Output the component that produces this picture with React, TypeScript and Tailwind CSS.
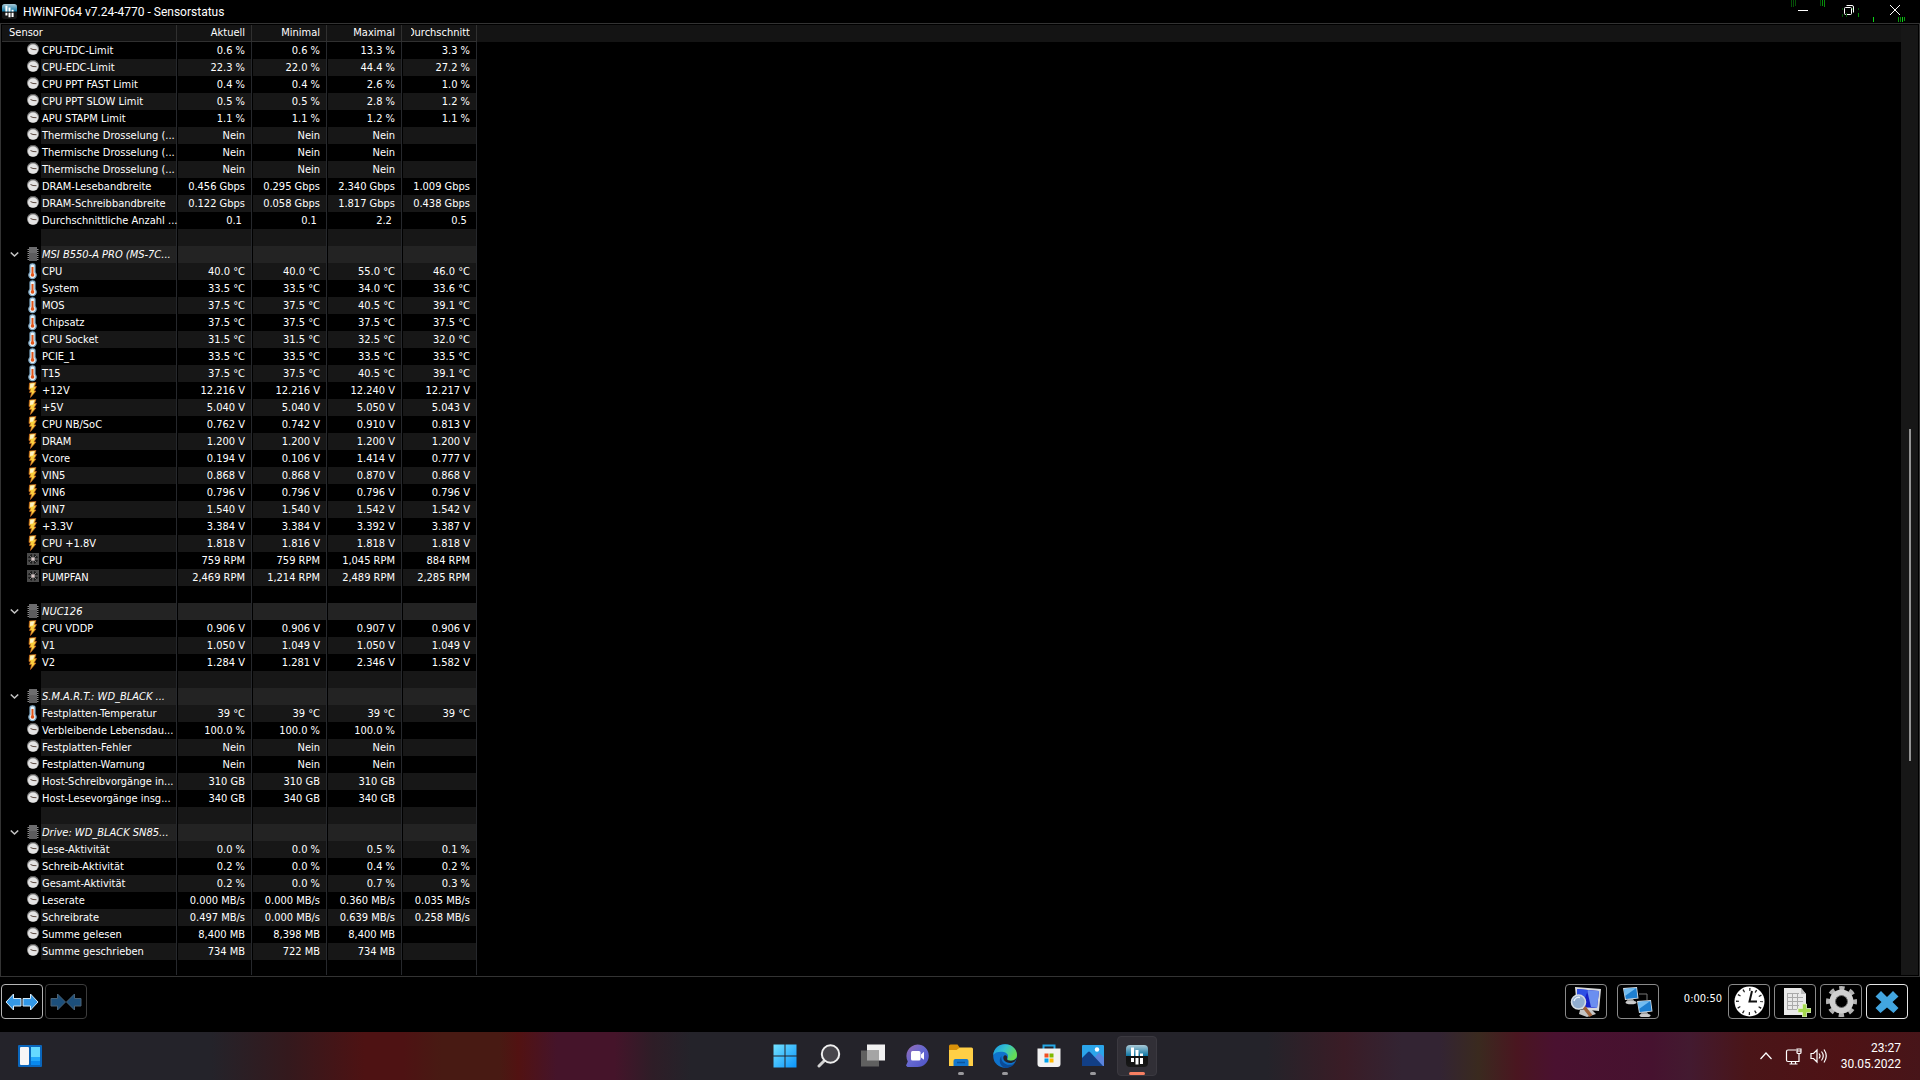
import type { ReactNode } from "react";

type IconKind = "clock" | "temp" | "volt" | "fan" | "chip";

type Row = {
    kind?: IconKind;
    name?: string;
    values?: string[];
    group?: boolean;
};

const row = (kind: IconKind, name: string, ...values: string[]): Row => ({ kind, name, values });
const group = (name: string): Row => ({ kind: "chip", name, group: true });
const spacer: Row = {};

const ROWS: Row[] = [
    row("clock", "CPU-TDC-Limit", "0.6 %", "0.6 %", "13.3 %", "3.3 %"),
    row("clock", "CPU-EDC-Limit", "22.3 %", "22.0 %", "44.4 %", "27.2 %"),
    row("clock", "CPU PPT FAST Limit", "0.4 %", "0.4 %", "2.6 %", "1.0 %"),
    row("clock", "CPU PPT SLOW Limit", "0.5 %", "0.5 %", "2.8 %", "1.2 %"),
    row("clock", "APU STAPM Limit", "1.1 %", "1.1 %", "1.2 %", "1.1 %"),
    row("clock", "Thermische Drosselung (...", "Nein", "Nein", "Nein"),
    row("clock", "Thermische Drosselung (...", "Nein", "Nein", "Nein"),
    row("clock", "Thermische Drosselung (...", "Nein", "Nein", "Nein"),
    row("clock", "DRAM-Lesebandbreite", "0.456 Gbps", "0.295 Gbps", "2.340 Gbps", "1.009 Gbps"),
    row("clock", "DRAM-Schreibbandbreite", "0.122 Gbps", "0.058 Gbps", "1.817 Gbps", "0.438 Gbps"),
    // no unit, the trailing space stays
    row("clock", "Durchschnittliche Anzahl ...", "0.1\u00a0", "0.1\u00a0", "2.2\u00a0", "0.5\u00a0"),
    spacer,
    group("MSI B550-A PRO (MS-7C..."),
    row("temp", "CPU", "40.0 °C", "40.0 °C", "55.0 °C", "46.0 °C"),
    row("temp", "System", "33.5 °C", "33.5 °C", "34.0 °C", "33.6 °C"),
    row("temp", "MOS", "37.5 °C", "37.5 °C", "40.5 °C", "39.1 °C"),
    row("temp", "Chipsatz", "37.5 °C", "37.5 °C", "37.5 °C", "37.5 °C"),
    row("temp", "CPU Socket", "31.5 °C", "31.5 °C", "32.5 °C", "32.0 °C"),
    row("temp", "PCIE_1", "33.5 °C", "33.5 °C", "33.5 °C", "33.5 °C"),
    row("temp", "T15", "37.5 °C", "37.5 °C", "40.5 °C", "39.1 °C"),
    row("volt", "+12V", "12.216 V", "12.216 V", "12.240 V", "12.217 V"),
    row("volt", "+5V", "5.040 V", "5.040 V", "5.050 V", "5.043 V"),
    row("volt", "CPU NB/SoC", "0.762 V", "0.742 V", "0.910 V", "0.813 V"),
    row("volt", "DRAM", "1.200 V", "1.200 V", "1.200 V", "1.200 V"),
    row("volt", "Vcore", "0.194 V", "0.106 V", "1.414 V", "0.777 V"),
    row("volt", "VIN5", "0.868 V", "0.868 V", "0.870 V", "0.868 V"),
    row("volt", "VIN6", "0.796 V", "0.796 V", "0.796 V", "0.796 V"),
    row("volt", "VIN7", "1.540 V", "1.540 V", "1.542 V", "1.542 V"),
    row("volt", "+3.3V", "3.384 V", "3.384 V", "3.392 V", "3.387 V"),
    row("volt", "CPU +1.8V", "1.818 V", "1.816 V", "1.818 V", "1.818 V"),
    row("fan", "CPU", "759 RPM", "759 RPM", "1,045 RPM", "884 RPM"),
    row("fan", "PUMPFAN", "2,469 RPM", "1,214 RPM", "2,489 RPM", "2,285 RPM"),
    spacer,
    group("NUC126"),
    row("volt", "CPU VDDP", "0.906 V", "0.906 V", "0.907 V", "0.906 V"),
    row("volt", "V1", "1.050 V", "1.049 V", "1.050 V", "1.049 V"),
    row("volt", "V2", "1.284 V", "1.281 V", "2.346 V", "1.582 V"),
    spacer,
    group("S.M.A.R.T.: WD_BLACK ..."),
    row("temp", "Festplatten-Temperatur", "39 °C", "39 °C", "39 °C", "39 °C"),
    row("clock", "Verbleibende Lebensdau...", "100.0 %", "100.0 %", "100.0 %"),
    row("clock", "Festplatten-Fehler", "Nein", "Nein", "Nein"),
    row("clock", "Festplatten-Warnung", "Nein", "Nein", "Nein"),
    row("clock", "Host-Schreibvorgänge in...", "310 GB", "310 GB", "310 GB"),
    row("clock", "Host-Lesevorgänge insg...", "340 GB", "340 GB", "340 GB"),
    spacer,
    group("Drive: WD_BLACK SN85..."),
    row("clock", "Lese-Aktivität", "0.0 %", "0.0 %", "0.5 %", "0.1 %"),
    row("clock", "Schreib-Aktivität", "0.2 %", "0.0 %", "0.4 %", "0.2 %"),
    row("clock", "Gesamt-Aktivität", "0.2 %", "0.0 %", "0.7 %", "0.3 %"),
    row("clock", "Leserate", "0.000 MB/s", "0.000 MB/s", "0.360 MB/s", "0.035 MB/s"),
    row("clock", "Schreibrate", "0.497 MB/s", "0.000 MB/s", "0.639 MB/s", "0.258 MB/s"),
    row("clock", "Summe gelesen", "8,400 MB", "8,398 MB", "8,400 MB"),
    row("clock", "Summe geschrieben", "734 MB", "722 MB", "734 MB"),
    spacer,
];

function SensorIcon({ kind }: { kind: IconKind }) {
    return (
        <svg className="block h-[17px] w-[14px] shrink-0" viewBox="0 0 14 17" aria-hidden="true">
            {kind === "clock" && (
                <>
                    <circle cx="7" cy="7" r="6" fill="#8f8f8f" />
                    <path d="M2.5 3.5a6 6 0 0 1 9 0" stroke="#555" strokeWidth="1" fill="none" />
                    <circle cx="7" cy="7.6" r="5" fill="#e4e4e4" />
                    <path d="M4.500 6.500 7 7.500l3.500.2" stroke="#5c4a42" strokeWidth="1" fill="none" />
                </>
            )}
            {kind === "temp" && (
                <>
                    <path d="M4 2.500Q4 .8 6.500.8T9 2.500V9.500a3.600 3.600 0 1 1-5 0Z" fill="#e8f2f8" stroke="#7fa9c6" strokeWidth="1.200" />
                    <rect x="5.500" y="4" width="2" height="8" fill="#e2561a" />
                    <circle cx="6.500" cy="12" r="1.800" fill="#e2561a" />
                </>
            )}
            {kind === "volt" && (
                <>
                    <path d="M3.500 1 10 .5 8.500 4.500h2L8 9h2L4.500 15.500l1-5H3.500L4.500 7.500H3Z" fill="#f9cf3e" stroke="#c8621c" strokeWidth=".7" />
                    <path d="M4.300 1.700 8.500 1.300 7 5.500 4 6Z" fill="#fdf3c4" />
                </>
            )}
            {kind === "fan" && (
                <>
                    <rect x="1" y="1" width="12" height="12" fill="#4a4a4a" />
                    <circle cx="7" cy="7" r="5" fill="#1c1c1c" />
                    <path d="M7 2v10M2 7h10M3.500 3.500l7 7M10.500 3.500l-7 7" stroke="#777" strokeWidth="1" />
                    <circle cx="7" cy="7" r="1.800" fill="#d9c8c8" />
                </>
            )}
            {kind === "chip" && (
                <>
                    <path d="M1.500 3.500h11M1.500 5.500h11M1.500 7.500h11M1.500 9.500h11M1.500 11.500h11M1.500 13.500h11" stroke="#8d8d8d" strokeWidth="1" />
                    <rect x="3" y="1" width="8" height="14" fill="#5c5c5e" />
                    <rect x="3" y="1" width="8" height="6" fill="#6c6c6e" />
                </>
            )}
        </svg>
    );
}

function HwinfoLogo({ className }: { className: string }) {
    return (
        <svg className={className} viewBox="0 0 22 22" aria-hidden="true">
            <defs>
                <linearGradient id="hw" x1="0" y1="0" x2="0" y2="1">
                    <stop offset="0" stopColor="#a9c9d6" />
                    <stop offset=".48" stopColor="#1278a5" />
                    <stop offset=".52" stopColor="#111" />
                    <stop offset="1" stopColor="#181818" />
                </linearGradient>
            </defs>
            <rect width="22" height="22" rx="4" fill="url(#hw)" />
            <path d="M6.500 2.500V11M11 5v6M15.500 8.500V11M6.500 13v4M11 13v6.500M15.500 13v6" stroke="#fff" strokeWidth="3" />
        </svg>
    );
}

function Chevron() {
    return (
        <svg className="block h-[9px] w-[9px]" viewBox="0 0 9 9" fill="none" stroke="#c4c4c4" strokeWidth="1.6" aria-hidden="true">
            <path d="m.8 2.500 3.700 3.500L8.200 2.500" />
        </svg>
    );
}

function TitleBar() {
    return (
        <header className="relative flex h-[23px] shrink-0 items-center pl-[2px] pr-[2px]">
            <HwinfoLogo className="h-[15px] w-[15px]" />
            <h1 className="ml-[6px] font-[Roboto,'Open_Sans',sans-serif] text-[12px] leading-[20px]">HWiNFO64 v7.24-4770 - Sensorstatus</h1>
            <div className="ml-auto flex self-start">
                <button type="button" aria-label="Minimieren" className="flex h-[20px] w-[46px] items-center justify-center">
                    <svg className="h-[10px] w-[10px]" viewBox="0 0 10 10" stroke="#fff"><path d="M0 5.500h10" /></svg>
                </button>
                <button type="button" aria-label="Verkleinern" className="flex h-[20px] w-[46px] items-center justify-center">
                    <svg className="h-[10px] w-[10px]" viewBox="0 0 10 10" fill="none" stroke="#fff">
                        <rect x=".5" y="2.500" width="7" height="7" rx="1" />
                        <path d="M2.500.5H8Q9.500.5 9.500 2v5.500" />
                    </svg>
                </button>
                <button type="button" aria-label="Schließen" className="flex h-[20px] w-[46px] items-center justify-center">
                    <svg className="h-[10px] w-[10px]" viewBox="0 0 10 10" stroke="#fff"><path d="m0 0 10 10M10 0 0 10" /></svg>
                </button>
            </div>
            {/* green specks of the desktop overlay */}
            <svg className="pointer-events-none absolute right-0 top-0 h-[23px] w-[130px]" viewBox="0 0 130 23" aria-hidden="true">
                <path d="M1.500 0v7M3.500 0v7M5.500 0v6M30.500 0v6M52.500 8v2M52.500 14v3M56.500 13v4M62.500 8v2M68.500 8v2" stroke="#064f08" />
                <path d="M32.500 0v6M34.500 0v7M68.500 13v4M110.500 17v5" stroke="#078c0b" />
                <path d="M83.500 17v5M112.500 17v5" stroke="#0bd414" />
                <path d="M108.500 17v5M114.500 17v4" stroke="#079b0b" />
            </svg>
        </header>
    );
}

function SensorTable() {
    return (
        <table className="w-full table-fixed border-separate border-spacing-0 text-[11px] leading-[16px]">
            <colgroup>
                <col className="w-[175px]" />
                <col className="w-[75px]" />
                <col className="w-[75px]" />
                <col className="w-[75px]" />
                <col className="w-[75px]" />
                <col />
            </colgroup>
            <thead>
                <tr className="h-[17px] bg-[#141414]">
                    <th scope="col" className="border-b border-r border-[#303030] p-0 pl-[7px] text-left font-normal">Sensor</th>
                    {["Aktuell", "Minimal", "Maximal", "Durchschnitt"].map((title) => (
                        <th key={title} scope="col" className="border-b border-r border-[#303030] p-0 pl-[9px] pr-[6px] font-normal">
                            <div className="flex justify-end overflow-hidden">{title}</div>
                        </th>
                    ))}
                    <th className="p-0" />
                </tr>
            </thead>
            <tbody>
                {ROWS.map((r, i) => {
                    const fill = r.group ? "bg-[#232323]" : i % 2 ? "bg-[#171717]" : "bg-black";
                    return (
                        <tr key={i} className="h-[17px]">
                            <td className="border-r border-[#26282c] p-0">
                                <div className="flex h-[17px] whitespace-nowrap">
                                    <div className="flex w-[39px] shrink-0 items-center justify-end pr-[1px]">
                                        {r.group && (
                                            <button type="button" aria-label={`${r.name} einklappen`} className="mr-[7px]">
                                                <Chevron />
                                            </button>
                                        )}
                                        {r.kind && <SensorIcon kind={r.kind} />}
                                    </div>
                                    <div className={`min-w-0 flex-1 pl-[1px] pt-[1px] ${fill} ${r.group ? "italic" : ""}`}>{r.name}</div>
                                </div>
                            </td>
                            {[0, 1, 2, 3].map((c) => (
                                <td key={c} className={`whitespace-nowrap border-l border-r border-l-black border-r-[#26282c] p-0 pr-[6px] pt-[1px] text-right ${fill}`}>
                                    {r.values?.[c]}
                                </td>
                            ))}
                            <td className="p-0" />
                        </tr>
                    );
                })}
            </tbody>
        </table>
    );
}

function ToolButton({ label, border = "border-[#8a8a8a]", disabled, children }: { label: string; border?: string; disabled?: boolean; children: ReactNode }) {
    return (
        <button type="button" aria-label={label} disabled={disabled} className={`flex h-[35px] w-[42px] items-center justify-center rounded-[4px] border ${border}`}>
            {children}
        </button>
    );
}

function Monitor({ x, y }: { x: number; y: number }) {
    return (
        <g transform={`translate(${x} ${y})`}>
            <path d="M5 12h5l2 3H3Z" fill="#999" />
            <ellipse cx="8" cy="15.500" rx="5.500" ry="1.800" fill="#c9c9c9" />
            <path d="m0 1 14-1 1.500 11.500L2 13Z" fill="#d3dce4" />
            <path d="m1 2 12.300-1 1.200 9.700L2.800 12Z" fill="#1e7fd0" />
            <path d="m1 2 12.300-1L2 9Z" fill="#74bdf0" />
        </g>
    );
}

function Toolbar() {
    return (
        <div className="flex h-[55px] shrink-0 items-start pl-[1px] pr-[12px] pt-[7px]">
            <div className="flex gap-[2px]">
                <ToolButton label="Spalten verbreitern" border="border-[#b5b5b5]">
                    <svg className="h-[18px] w-[34px]" viewBox="0 0 34 18" fill="#3398e6" stroke="#d6ebfa" strokeWidth="1">
                        <path d="M1 9 8.500 1v4.500H16v7.500H8.500V17ZM33 9 25.500 1v4.500H18v7.500h7.500V17Z" />
                    </svg>
                </ToolButton>
                <ToolButton label="Spalten verkleinern" border="border-[#3c3c3c]" disabled>
                    <svg className="h-[18px] w-[32px]" viewBox="0 0 32 18" fill="#1c4f7b" stroke="#4a6377" strokeWidth="1">
                        <path d="M15.500 9 7.500 1v4.500H1v7.500h6.500V17ZM16.500 9l8-8v4.500H31v7.500h-6.500V17Z" />
                    </svg>
                </ToolButton>
            </div>
            <div className="ml-auto flex items-center">
                <ToolButton label="Systemübersicht">
                    <svg className="h-[31px] w-[32px]" viewBox="0 0 32 31">
                        <path d="M10 24h12l4 4-9 3-8-3Z" fill="#c5c5c5" />
                        <path d="m5 1 26 2-2 22-22-2Z" fill="#d8dadd" />
                        <path d="m7 3 22 2-2 17-19-1Z" fill="#1620c8" />
                        <path d="m17 4 12 1-2 17-6-1Z" fill="#6b8ff0" />
                        <path d="m7 3 11 1-3 8-8 1Z" fill="#2d50e4" />
                        <path d="m14 21 7 9" stroke="#a0623a" strokeWidth="3.500" />
                        <circle cx="8.500" cy="16" r="7" fill="#90add0" stroke="#d5dde4" strokeWidth="1.600" />
                        <path d="M4 15a5 5 0 0 1 6-3.500" stroke="#e8f1fa" strokeWidth="1.500" fill="none" />
                    </svg>
                </ToolButton>
                <div className="ml-[10px]">
                    <ToolButton label="Netzwerk">
                        <svg className="h-[31px] w-[32px]" viewBox="0 0 32 31">
                            <path d="M17 8h8v6" stroke="#777" fill="none" />
                            <Monitor x={1} y={1} />
                            <Monitor x={15} y={14} />
                        </svg>
                    </ToolButton>
                </div>
                <time className="mx-[6px] w-[57px] whitespace-nowrap pb-[4px] text-right text-[11px]">0:00:50</time>
                <div className="flex gap-[4px]">
                    <ToolButton label="Zeit zurücksetzen">
                        <svg className="h-[31px] w-[31px]" viewBox="0 0 31 31">
                            <circle cx="15.500" cy="15.500" r="15" fill="#fff" />
                            <circle cx="15.500" cy="15.500" r="12" fill="none" stroke="#222" strokeWidth="3" strokeDasharray="1.300 4.983" strokeDashoffset=".65" />
                            <path d="M18 5 15.500 15.500H23" stroke="#111" strokeWidth="2" fill="none" />
                        </svg>
                    </ToolButton>
                    <ToolButton label="Protokollierung starten">
                        <svg className="h-[31px] w-[32px]" viewBox="0 0 32 31">
                            <path d="M5 2h17l5 6v21H5Z" fill="#e9e9e9" />
                            <path d="M22 2v6h5Z" fill="#bcbcbc" />
                            <path d="M8 7.500h12M8 11.500h16M8 15.500h16M8 19.500h12M8 23.500h10M8.500 7v17M13.500 7v17M18.500 7v16" stroke="#aaa" fill="none" />
                            <path d="M23.500 18h4v4.500H32v4h-4.500V31h-4v-4.500H19v-4h4.500Z" fill="#a5d94e" stroke="#e5f5c9" strokeWidth=".8" />
                        </svg>
                    </ToolButton>
                    <ToolButton label="Einstellungen">
                        <svg className="h-[31px] w-[31px]" viewBox="0 0 31 31">
                            <circle cx="15.500" cy="15.500" r="13" fill="none" stroke="#b4b4b4" strokeWidth="5" strokeDasharray="5.200 5.010" strokeDashoffset="2.600" />
                            <circle cx="15.500" cy="15.500" r="9" fill="none" stroke="#d0d0d0" strokeWidth="6" />
                            <circle cx="15.500" cy="15.500" r="6" fill="#000" stroke="#777" />
                        </svg>
                    </ToolButton>
                    <ToolButton label="Schließen" border="border-[#e6e6e6]">
                        <svg className="h-[24px] w-[24px]" viewBox="0 0 24 24">
                            <path d="m6 1 6 6 6-6 5.500 5.500L17.500 12l6 6-5 5L12 17.500 5.500 23 .5 18l6-6-6-5.500Z" fill="#42a5e0" />
                        </svg>
                    </ToolButton>
                </div>
            </div>
        </div>
    );
}

const APPS: { label: string; state?: "open" | "active"; icon: ReactNode }[] = [
    {
        label: "Start",
        icon: (
            <>
                <defs>
                    <linearGradient id="win" x1="0" y1="0" x2="1" y2="1">
                        <stop stopColor="#73e2ff" />
                        <stop offset="1" stopColor="#0a94fb" />
                    </linearGradient>
                </defs>
                <path d="M.5.5h11v11H.5ZM12.500.5h11v11h-11ZM.5 12.500h11v11H.5ZM12.500 12.500h11v11h-11Z" fill="url(#win)" />
            </>
        ),
    },
    {
        label: "Suche",
        icon: (
            <>
                <path d="m8 16-6 6" stroke="#d2d2d2" strokeWidth="3" strokeLinecap="round" />
                <circle cx="13.500" cy="10" r="8.700" fill="#48464c" stroke="#efefef" strokeWidth="2" />
            </>
        ),
    },
    {
        label: "Taskansicht",
        icon: (
            <>
                <rect x="6" y=".5" width="18" height="16" fill="#f1f1f1" />
                <rect y="6.500" width="18" height="16" fill="#606060" />
                <rect x="6" y="6.500" width="12" height="10" fill="#a5a5a5" />
            </>
        ),
    },
    {
        label: "Chat",
        icon: (
            <>
                <defs>
                    <linearGradient id="chat" x1="0" y1="0" x2="1" y2="1">
                        <stop stopColor="#9a6bb2" />
                        <stop offset=".5" stopColor="#6468d0" />
                        <stop offset="1" stopColor="#4d52c6" />
                    </linearGradient>
                </defs>
                <path d="M12.500.5a11.300 11.300 0 0 1 0 22.600H2.500L1 21.500l1.800-4A11.500 11.500 0 0 1 12.500.5Z" fill="url(#chat)" />
                <rect x="6" y="7" width="9.500" height="9.500" rx="1.500" fill="#fff" />
                <path d="M16 10.500 19 7.800v8L16 13.500Z" fill="#fff" />
            </>
        ),
    },
    {
        label: "Explorer",
        state: "open",
        icon: (
            <>
                <path d="M0 2Q0 .5 1.500.5h7L11 4l-2 3H0Z" fill="#d99109" />
                <path d="M0 6h7.500L11 3.500h11.500Q24 3.500 24 5v17H0Z" fill="#ffcf46" />
                <path d="M4.500 22v-5q0-2 2-2h11q2 0 2 2v5Z" fill="#1377ce" />
                <path d="M8 18.500h8" stroke="#0b559c" strokeWidth="1.500" />
            </>
        ),
    },
    {
        label: "Edge",
        state: "open",
        icon: (
            <>
                <defs>
                    <linearGradient id="edgeTop" x1="0" y1="0" x2="1" y2=".5">
                        <stop stopColor="#1694e4" />
                        <stop offset=".5" stopColor="#35c2ce" />
                        <stop offset="1" stopColor="#65dd52" />
                    </linearGradient>
                </defs>
                <circle cx="12" cy="12" r="11.800" fill="#0f73cc" />
                <path d="M.2 11C1 4 6 .2 12 .2c7 0 12 5 12 10.500 0 4-3 6-6.300 6-2.500 0-4-1-3.500-2 1.800-2.300.7-5.700-3.200-6.700C6.500 7 2 8 .2 11Z" fill="url(#edgeTop)" />
                <path d="M8.500 12c-1 5 3 9 8 8.800 3 0 5-1 6-2.600C20 22.500 16 24 12.500 24 7 23 5 16 8.500 12Z" fill="#0b4b98" />
                <path d="M14.200 14.700c-.5 1 1 2 3.500 2 2.500 0 4.500-1 6-3.200-.3 3-2.700 5.500-6.700 5.500-5 0-7.500-4-6.500-6.500 1-2.200 4.200-1.500 3.700 2.200Z" fill="#24232a" />
            </>
        ),
    },
    {
        label: "Microsoft Store",
        icon: (
            <>
                <path d="M6.500 5V1.500h11V5" fill="none" stroke="#25a8e6" strokeWidth="2" />
                <path d="M.5 4.500h23V20q0 3-3 3h-17q-3 0-3-3Z" fill="#f2f2f2" />
                <path d="M7.500 9.500h4v4h-4Z" fill="#f05022" />
                <path d="M12.500 9.500h4v4h-4Z" fill="#7eb900" />
                <path d="M7.500 14.500h4v4h-4Z" fill="#00a3ee" />
                <path d="M12.500 14.500h4v4h-4Z" fill="#ffb800" />
            </>
        ),
    },
    {
        label: "Fotos",
        state: "open",
        icon: (
            <>
                <rect x="1" y="1" width="22" height="21" rx="1" fill="#2ba5ea" />
                <path d="m11 16 7-7.500 5 5V22H11Z" fill="#5a84dc" />
                <path d="m1 14 6-6q1-1 2 0l13 14H1Z" fill="#123f86" />
                <circle cx="16" cy="5.500" r="2.200" fill="#fff" />
            </>
        ),
    },
    { label: "HWiNFO64", state: "active", icon: null },
];

function Taskbar() {
    return (
        <nav
            aria-label="Taskleiste"
            className="grid h-[48px] shrink-0 grid-cols-[1fr_auto_1fr] items-center bg-[linear-gradient(90deg,#24232a_0%,#24232a_11%,#34191d_15%,#4e1213_19%,#4e1213_21%,#481a13_23%,#481a13_26%,#521212_27%,#45142a_29%,#45142a_32%,#2e1d27_34%,#24232a_36%,#24232a_66%,#3a1c26_70%,#332433_73%,#332433_75%,#3a2a1f_77%,#4a1620_79%,#4a1130_81%,#46122f_86%,#431a30_88%,#4a1518_91%,#4e1215_96%,#471519_100%)]"
        >
            <button type="button" aria-label="Widgets" className="ml-[18px] w-[24px]">
                <svg className="h-[22px] w-[24px]" viewBox="0 0 24 22">
                    <rect width="24" height="22" rx="1" fill="#0a66bc" />
                    <rect x="2" y="2" width="9" height="18" rx="1" fill="#f6f6f6" />
                    <path d="M13 2h9v10h-9Z" fill="#66d9ff" />
                    <path d="M13 12h9v4h-9Z" fill="#22a7fa" />
                    <path d="M13 16h9v4h-9Z" fill="#0889ee" />
                </svg>
            </button>
            <div className="flex pl-[2px]">
                {APPS.map((app) => (
                    <div key={app.label} className="flex w-[44px] justify-center">
                        <button
                            type="button"
                            aria-label={app.label}
                            className={`relative flex h-[40px] w-[40px] items-center justify-center rounded-[4px] ${app.state === "active" ? "border border-[#3b3940] bg-[#312f36]" : ""}`}
                        >
                            {app.icon ? (
                                <svg className="h-[24px] w-[24px]" viewBox="0 0 24 24">{app.icon}</svg>
                            ) : (
                                <HwinfoLogo className="h-[22px] w-[22px]" />
                            )}
                            {app.state === "open" && <span className="absolute bottom-[1px] h-[3px] w-[6px] rounded-full bg-[#9a999d]" />}
                            {app.state === "active" && <span className="absolute bottom-0 h-[3px] w-[16px] rounded-full bg-[#f77f62]" />}
                        </button>
                    </div>
                ))}
            </div>
            <div className="flex items-center justify-end pr-[19px]">
                <button type="button" aria-label="Ausgeblendete Symbole einblenden">
                    <svg className="h-[12px] w-[12px]" viewBox="0 0 12 12" fill="none" stroke="#fff" strokeWidth="1.200"><path d="m.5 9 5.500-6 5.500 6" /></svg>
                </button>
                <button type="button" aria-label="Netzwerk und Lautstärke" className="ml-[13px] flex items-center gap-[8px]">
                    <svg className="h-[17px] w-[17px]" viewBox="0 0 17 17" fill="none" stroke="#fff" strokeWidth="1.200">
                        <path d="M11 2H3Q1.500 2 1.500 3.500v8.500Q1.500 13.500 3 13.500h11V6M6.500 13.500V16M10.500 13.500V16M4.500 16h8M12 1h4v3.500q0 1-1 1h-2q-1 0-1-1ZM12 3h4" />
                    </svg>
                    <svg className="h-[16px] w-[17px]" viewBox="0 0 17 16" fill="none" stroke="#fff" strokeWidth="1.200">
                        <path d="M1 5.500h2.500L7 2v12L3.500 10.500H1ZM9 5.500q2 2.500 0 5M11.500 3.500q3.500 4.500 0 9M14 1.500q4.500 6.500 0 13" />
                    </svg>
                </button>
                <time className="ml-[14px] text-right font-[Roboto,'Open_Sans',sans-serif] text-[12px] leading-[16px]">
                    23:27
                    <br />
                    30.05.2022
                </time>
            </div>
        </nav>
    );
}

export default function App() {
    return (
        <div className="flex h-screen flex-col overflow-hidden bg-black font-['DejaVu_Sans_Condensed','Noto_Sans',sans-serif] text-white">
            <TitleBar />
            <main className="flex min-h-0 flex-1 border border-[#333] p-[1px]">
                <div className="min-w-0 flex-1 overflow-hidden">
                    <SensorTable />
                </div>
                <div className="flex w-[17px] shrink-0 flex-col items-center bg-[#171717]">
                    <div className="flex-[404]" />
                    <div className="w-[2px] flex-[332] bg-[#949494]" />
                    <div className="flex-[214]" />
                </div>
            </main>
            <Toolbar />
            <Taskbar />
        </div>
    );
}
